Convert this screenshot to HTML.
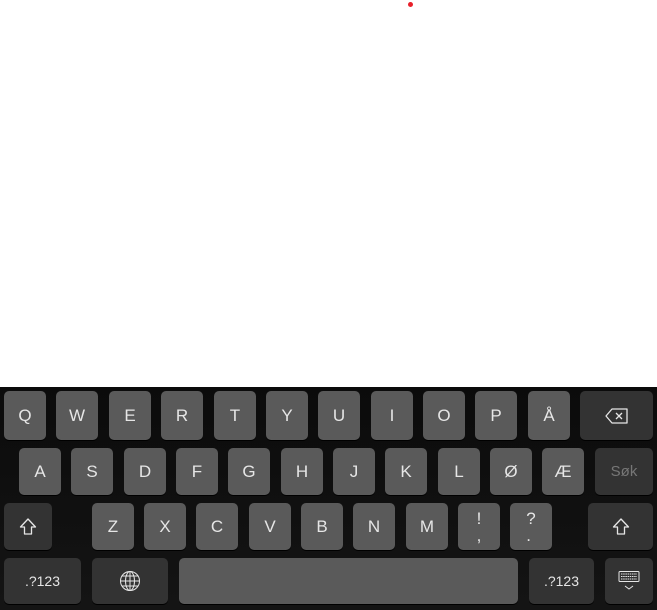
<!DOCTYPE html>
<html><head><meta charset="utf-8"><style>
*{margin:0;padding:0;box-sizing:border-box}
body{width:657px;height:610px;background:#fff;position:relative;overflow:hidden;font-family:"Liberation Sans",sans-serif}
.dot{position:absolute;left:408px;top:2px;width:5px;height:5px;border-radius:50%;background:#e8202a}
.kb{position:absolute;left:0;top:387px;width:657px;height:223px;background:linear-gradient(#0b0b0b,#141414)}
.k{position:absolute;background:#5a5a5a;border-radius:5px;color:#e6e6e6;font-size:17px;display:flex;align-items:center;justify-content:center;box-shadow:0 1px 0 #000}
.d{background:#333333}
.s{font-size:14px}
</style></head><body>
<div class="dot"></div>
<div class="kb"></div>
<!-- row1 y 391-440 -->
<div class="k" style="left:4px;top:391px;width:42px;height:49px">Q</div>
<div class="k" style="left:56px;top:391px;width:42px;height:49px">W</div>
<div class="k" style="left:109px;top:391px;width:42px;height:49px">E</div>
<div class="k" style="left:161px;top:391px;width:42px;height:49px">R</div>
<div class="k" style="left:214px;top:391px;width:42px;height:49px">T</div>
<div class="k" style="left:266px;top:391px;width:42px;height:49px">Y</div>
<div class="k" style="left:318px;top:391px;width:42px;height:49px">U</div>
<div class="k" style="left:371px;top:391px;width:42px;height:49px">I</div>
<div class="k" style="left:423px;top:391px;width:42px;height:49px">O</div>
<div class="k" style="left:475px;top:391px;width:42px;height:49px">P</div>
<div class="k" style="left:528px;top:391px;width:42px;height:49px">Å</div>
<div class="k d" style="left:580px;top:391px;width:73px;height:49px"><svg width="24" height="16" viewBox="0 0 24 16"><path d="M7 1H22V15H7L1 8Z" fill="none" stroke="#e6e6e6" stroke-width="1.3" stroke-linejoin="round"/><path d="M11 5L17 11M17 5L11 11" stroke="#e6e6e6" stroke-width="1.3"/></svg></div>
<!-- row2 448-495 -->
<div class="k" style="left:19px;top:448px;width:42px;height:47px">A</div>
<div class="k" style="left:71px;top:448px;width:42px;height:47px">S</div>
<div class="k" style="left:124px;top:448px;width:42px;height:47px">D</div>
<div class="k" style="left:176px;top:448px;width:42px;height:47px">F</div>
<div class="k" style="left:228px;top:448px;width:42px;height:47px">G</div>
<div class="k" style="left:281px;top:448px;width:42px;height:47px">H</div>
<div class="k" style="left:333px;top:448px;width:42px;height:47px">J</div>
<div class="k" style="left:385px;top:448px;width:42px;height:47px">K</div>
<div class="k" style="left:438px;top:448px;width:42px;height:47px">L</div>
<div class="k" style="left:490px;top:448px;width:42px;height:47px">Ø</div>
<div class="k" style="left:542px;top:448px;width:42px;height:47px">Æ</div>
<div class="k d" style="left:595px;top:448px;width:58px;height:47px;color:#777;font-size:15px">Søk</div>
<!-- row3 503-550 -->
<div class="k d" style="left:4px;top:503px;width:48px;height:47px"><svg width="18" height="18" viewBox="0 0 18 18"><path d="M9 1L1.5 9H5.5V16H12.5V9H16.5Z" fill="none" stroke="#e6e6e6" stroke-width="1.3" stroke-linejoin="round"/></svg></div>
<div class="k" style="left:92px;top:503px;width:42px;height:47px">Z</div>
<div class="k" style="left:144px;top:503px;width:42px;height:47px">X</div>
<div class="k" style="left:196px;top:503px;width:42px;height:47px">C</div>
<div class="k" style="left:249px;top:503px;width:42px;height:47px">V</div>
<div class="k" style="left:301px;top:503px;width:42px;height:47px">B</div>
<div class="k" style="left:353px;top:503px;width:42px;height:47px">N</div>
<div class="k" style="left:406px;top:503px;width:42px;height:47px">M</div>
<div class="k" style="left:458px;top:503px;width:42px;height:47px;flex-direction:column;line-height:17px">!<br>,</div>
<div class="k" style="left:510px;top:503px;width:42px;height:47px;flex-direction:column;line-height:17px">?<br>.</div>
<div class="k d" style="left:588px;top:503px;width:65px;height:47px"><svg width="18" height="18" viewBox="0 0 18 18"><path d="M9 1L1.5 9H5.5V16H12.5V9H16.5Z" fill="none" stroke="#e6e6e6" stroke-width="1.3" stroke-linejoin="round"/></svg></div>
<!-- row4 558-604 -->
<div class="k d s" style="left:4px;top:558px;width:77px;height:46px">.?123</div>
<div class="k d" style="left:92px;top:558px;width:76px;height:46px"><svg width="22" height="22" viewBox="0 0 22 22" fill="none" stroke="#e6e6e6" stroke-width="1"><circle cx="11" cy="11" r="9.5"/><ellipse cx="11" cy="11" rx="4.5" ry="9.5"/><path d="M11 1.5V20.5M1.5 11H20.5M3 6H19M3 16H19"/></svg></div>
<div class="k" style="left:179px;top:558px;width:339px;height:46px"></div>
<div class="k d s" style="left:529px;top:558px;width:65px;height:46px">.?123</div>
<div class="k d" style="left:605px;top:558px;width:48px;height:46px"><svg width="22" height="22" viewBox="0 0 22 22" fill="none" stroke="#e6e6e6" stroke-width="1"><rect x="1" y="1.5" width="20" height="10" rx="1"/><path d="M3 4H19M3 6.5H19M3 9H19" stroke-dasharray="1.5 0.7"/><path d="M7 16L11 19L15 16"/></svg></div>
</body></html>
